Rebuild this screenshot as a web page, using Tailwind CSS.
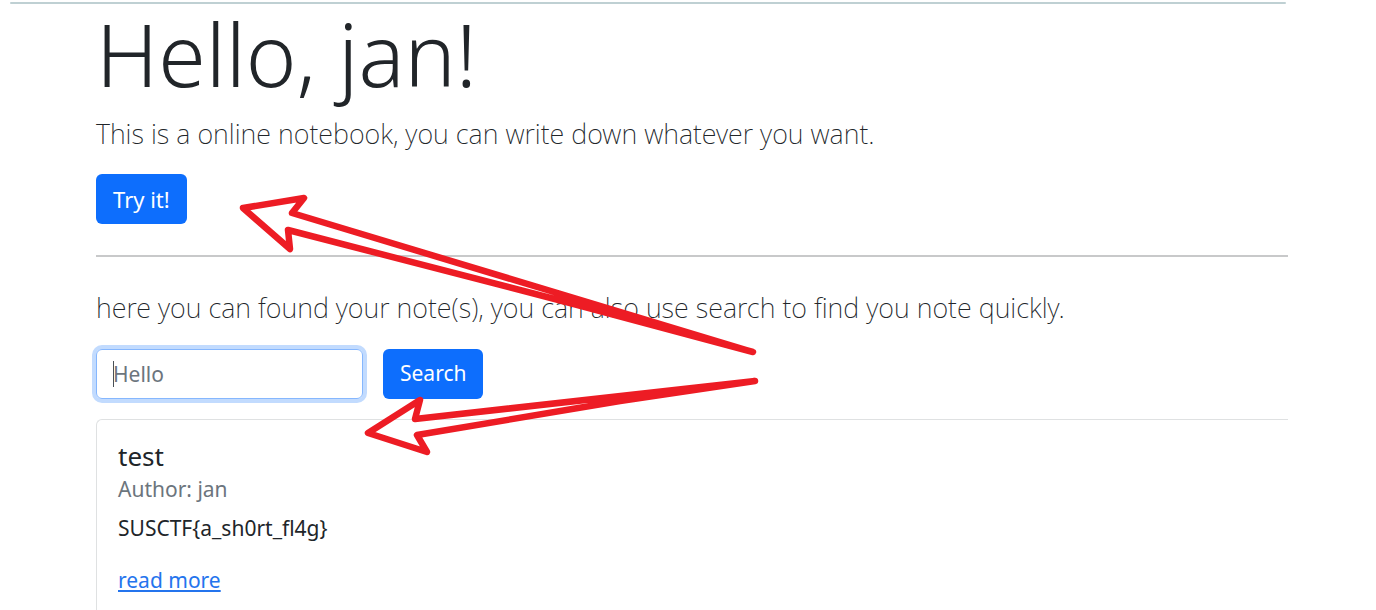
<!DOCTYPE html>
<html lang="en">
<head>
<meta charset="utf-8">
<title>Notebook</title>
<script src="https://cdn.jsdelivr.net/npm/@tailwindcss/browser@4"></script>
</head>
<body class="relative flex min-h-screen flex-col bg-white text-[#212529] font-['Noto_Sans','Open_Sans',sans-serif]">
<div class="mt-[2px] mr-[90px] ml-[10px] h-[2px] rounded-full bg-[#bfd0d3]"></div>
<main class="mr-[88px] ml-24 flex flex-1 flex-col">
  <h1 class="text-[86px] leading-[100px] font-light">Hello, jan!</h1>
  <p class="mt-3 text-[27px] leading-9 font-extralight">This is a online notebook, you can write down whatever you want.</p>
  <button type="button" class="mt-[22px] flex h-[50px] items-center self-start rounded-md bg-[#0d6efd] px-[17px] text-[22px] text-white">Try it!</button>
  <hr class="mt-[31px] border-t-2 border-[#c8c9ca]">
  <p class="mt-[33px] text-[27px] leading-9 font-extralight">here you can found your note(s), you can also use search to find you note quickly.</p>
  <form class="mt-[23px] flex gap-5">
    <div class="relative">
      <input type="search" aria-label="Search notes" placeholder="Hello" class="h-[50px] w-[267px] rounded-md border border-[#86b7fe] px-4 text-[21px] ring-4 ring-[#c2dbfe] outline-none placeholder:text-[#6c757d]">
      <span class="absolute top-3 left-[17px] h-[26px] w-px bg-[#495057]"></span>
    </div>
    <button type="button" class="h-[50px] rounded-md bg-[#0d6efd] px-[17px] text-[21px] text-white">Search</button>
  </form>
  <article class="mt-5 flex-1 rounded-tl-md border-t border-l border-[#dfe1e2] px-[21px] pt-5">
    <h2 class="text-[26px] leading-8 font-normal">test</h2>
    <p class="text-[21px] leading-[34px] text-[#6c757d]">Author: jan</p>
    <p class="mt-[5px] text-[21px] leading-[34px]">SUSCTF{a_sh0rt_fl4g}</p>
    <a href="#" class="mt-[18px] inline-block text-[21px] leading-[34px] text-[#2474ed] underline underline-offset-2">read more</a>
  </article>
</main>
<svg class="pointer-events-none absolute top-0 left-0" width="1376" height="610" viewBox="0 0 1376 610" fill="none" stroke="#ed1c24" stroke-width="6.5" stroke-linecap="round" stroke-linejoin="round" aria-hidden="true">
  <path d="M753 352L292 213L304 198L243 208L290 249L288 230L570 303Z"/>
  <path d="M755 381L415 419L420 400L368 433L427 452L417 435L620 401Z"/>
</svg>
</body>
</html>
